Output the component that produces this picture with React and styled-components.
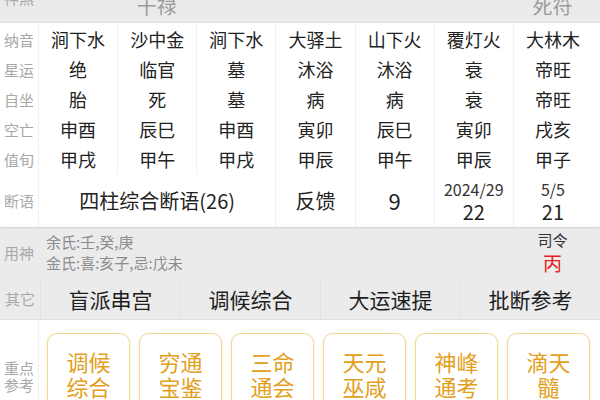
import React from 'react';
import styled, { createGlobalStyle } from 'styled-components';

const GlobalStyle = createGlobalStyle`
  html, body {
    margin: 0;
    padding: 0;
    background: #ffffff;
    font-family: "Noto Sans CJK SC", "Noto Sans", sans-serif;
    overflow: hidden;
  }
`;

// Whole screen
const Page = styled.div`
  width: 600px;
  height: 400px;
  overflow: hidden;
  background: #ffffff;
`;

// Cut-off row at the very top (神煞 row), scrolled mostly out of view
const TopBand = styled.div`
  display: grid;
  grid-template-columns: 38px repeat(7, 1fr);
  grid-template-rows: 22px;
  padding-right: 8px;
  height: 22px;
  overflow: hidden;
  align-items: end;
  background: #eaeaea;
  border-bottom: 1px solid #e2e2e2;
`;

const BandLabel = styled.div`
  font-size: 15px;
  line-height: 17px;
  color: #a8a8a8;
  text-align: center;
  padding-bottom: 16px;
`;

const BandCell = styled.div`
  font-size: 20px;
  line-height: 20px;
  color: #9a9a9a;
  text-align: center;
  padding-bottom: 6px;
`;

// White pillar table
const Table = styled.div`
  background: #ffffff;
  padding-top: 1px;
  box-shadow: 0 1px 2px rgba(0, 0, 0, 0.12);
  position: relative;
  z-index: 1;
`;

const Row = styled.div`
  display: grid;
  grid-template-columns: 38px repeat(7, 1fr);
  padding-right: 8px;
  height: ${p => p.$h || 30}px;
`;

const Label = styled.div`
  display: flex;
  align-items: center;
  justify-content: center;
  font-size: 15px;
  color: #a8a8a8;
`;

const Cell = styled.div`
  grid-column: span ${p => p.$span || 1};
  display: flex;
  flex-direction: column;
  align-items: center;
  justify-content: center;
  border-left: 1px solid #f0f0f0;
  font-size: ${p => p.$size || 18}px;
  line-height: 1.15;
  color: #222222;
`;

const Small = styled.span`
  font-size: 16px;
  line-height: 21px;
  color: #333333;
`;

const Big = styled.span`
  font-size: 20px;
  line-height: 23px;
  color: #222222;
`;

// Gray block with 用神 and 其它
const GrayBlock = styled.div`
  background: #ebebeb;
`;

const YongRow = styled.div`
  display: grid;
  grid-template-columns: 38px 1fr 79px;
  padding-right: 8px;
  height: 50px;
`;

const YongText = styled.div`
  display: flex;
  flex-direction: column;
  justify-content: center;
  padding-left: 8px;
  font-size: 15px;
  line-height: 21px;
  color: #8c8c8c;
`;

const SiLing = styled.div`
  display: flex;
  flex-direction: column;
  align-items: center;
  justify-content: center;
  font-size: 15px;
  line-height: 21px;
  color: #333333;
`;

const Bing = styled.span`
  font-size: 19px;
  line-height: 26px;
  color: #e5201f;
`;

const OtherRow = styled.div`
  display: grid;
  grid-template-columns: 40px repeat(4, 1fr);
  height: 42px;
  border-bottom: 1px solid #e0e0e0;
`;

const OtherBtn = styled.div`
  display: flex;
  align-items: center;
  justify-content: center;
  border-left: 1px solid #e2e2e2;
  font-size: 21px;
  color: #1e1e1e;
  padding-top: 2px;
`;

// Key references with cards
const RefSection = styled.div`
  display: flex;
  height: 90px;
`;

const RefLabel = styled.div`
  width: 38px;
  flex-shrink: 0;
  border-right: 1px solid #f0f0f0;
  padding-top: 39px;
  font-size: 15px;
  line-height: 17px;
  color: #a8a8a8;
  text-align: center;
`;

const Cards = styled.div`
  display: flex;
  gap: 9px;
  padding: 13px 0 0 8px;
`;

const Card = styled.div`
  width: 83px;
  height: 96px;
  box-sizing: border-box;
  border: 1.5px solid #f1da8e;
  border-radius: 10px;
  box-shadow: 0 1px 3px rgba(210, 170, 60, 0.25);
  padding-top: 15px;
  text-align: center;
  font-size: 22px;
  line-height: 25px;
  color: #e3a01c;
  background: #ffffff;
`;

const pillars = [
  ['纳音', ['涧下水', '沙中金', '涧下水', '大驿土', '山下火', '覆灯火', '大林木']],
  ['星运', ['绝', '临官', '墓', '沐浴', '沐浴', '衰', '帝旺']],
  ['自坐', ['胎', '死', '墓', '病', '病', '衰', '帝旺']],
  ['空亡', ['申酉', '辰巳', '申酉', '寅卯', '辰巳', '寅卯', '戌亥']],
  ['值旬', ['甲戌', '甲午', '甲戌', '甲辰', '甲午', '甲辰', '甲子']],
];

const others = ['盲派串宫', '调候综合', '大运速提', '批断参考'];

const books = [
  ['调候', '综合'],
  ['穷通', '宝鉴'],
  ['三命', '通会'],
  ['天元', '巫咸'],
  ['神峰', '通考'],
  ['滴天', '髓'],
];

const App = () => {
  return (
    <Page>
      <GlobalStyle />
      <TopBand>
        <BandLabel>神煞</BandLabel>
        <BandCell />
        <BandCell>干禄</BandCell>
        <BandCell />
        <BandCell />
        <BandCell />
        <BandCell />
        <BandCell>死符</BandCell>
      </TopBand>

      <Table>
        {pillars.map(([label, values]) => (
          <Row key={label}>
            <Label>{label}</Label>
            {values.map((v, i) => (
              <Cell key={i}>{v}</Cell>
            ))}
          </Row>
        ))}
        <Row $h={53}>
          <Label>断语</Label>
          <Cell $span={3} $size={20}>四柱综合断语(26)</Cell>
          <Cell $size={20}>反馈</Cell>
          <Cell $size={22}>9</Cell>
          <Cell>
            <Small>2024/29</Small>
            <Big>22</Big>
          </Cell>
          <Cell>
            <Small>5/5</Small>
            <Big>21</Big>
          </Cell>
        </Row>
      </Table>

      <GrayBlock>
        <YongRow>
          <Label>用神</Label>
          <YongText>
            <span>余氏:壬,癸,庚</span>
            <span>金氏:喜:亥子,忌:戊未</span>
          </YongText>
          <SiLing>
            <span>司令</span>
            <Bing>丙</Bing>
          </SiLing>
        </YongRow>
        <OtherRow>
          <Label>其它</Label>
          {others.map(o => (
            <OtherBtn key={o}>{o}</OtherBtn>
          ))}
        </OtherRow>
      </GrayBlock>

      <RefSection>
        <RefLabel>
          重点
          <br />
          参考
        </RefLabel>
        <Cards>
          {books.map(([a, b]) => (
            <Card key={a + b}>
              {a}
              <br />
              {b}
            </Card>
          ))}
        </Cards>
      </RefSection>
    </Page>
  );
};

export default App;
